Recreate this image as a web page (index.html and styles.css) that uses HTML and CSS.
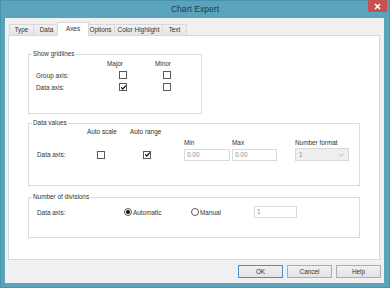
FILE: index.html
```html
<!DOCTYPE html>
<html lang="en">
<head>
    <meta charset="UTF-8">
    <title>Chart Expert</title>
    <link rel="stylesheet" href="styles.css">
</head>
<body>
    <div class="window">
        <div class="titlebar">
            <span></span>
            <span class="title">Chart Expert</span>
            <span class="close">
                <svg width="7" height="7" viewBox="0 0 7 7"><path d="M1 1 L6 6 M6 1 L1 6" stroke="#fff" stroke-width="1.6"/></svg>
            </span>
        </div>

        <div class="client">
            <div class="tabs">
                <div class="tab">Type</div>
                <div class="tab">Data</div>
                <div class="tab active">Axes</div>
                <div class="tab">Options</div>
                <div class="tab">Color Highlight</div>
                <div class="tab">Text</div>
            </div>

            <div class="panel">
                <div class="group gridlines">
                    <div class="group-title">Show gridlines</div>
                    <div class="gridlines-grid">
                        <span></span>
                        <span>Major</span>
                        <span>Minor</span>

                        <span>Group axis:</span>
                        <span class="cell major"><span class="check"></span></span>
                        <span class="cell minor"><span class="check"></span></span>

                        <span>Data axis:</span>
                        <span class="cell major">
                            <span class="check"><svg width="7" height="7" viewBox="0 0 7 7"><path d="M1.2 3.4 L2.8 5 L5.8 1.6" fill="none" stroke="#111" stroke-width="1.3"/></svg></span>
                        </span>
                        <span class="cell minor"><span class="check"></span></span>
                    </div>
                </div>

                <div class="group values">
                    <div class="group-title">Data values</div>
                    <div class="values-grid">
                        <span class="row-a"></span>
                        <span class="row-a">Auto scale</span>
                        <span class="row-a">Auto range</span>
                        <span class="row-a"></span>
                        <span class="row-a"></span>
                        <span class="row-a"></span>

                        <span></span>
                        <span></span>
                        <span></span>
                        <span>Min</span>
                        <span>Max</span>
                        <span>Number format</span>

                        <span class="cell">Data axis:</span>
                        <span class="cell scale"><span class="check"></span></span>
                        <span class="cell range">
                            <span class="check"><svg width="7" height="7" viewBox="0 0 7 7"><path d="M1.2 3.4 L2.8 5 L5.8 1.6" fill="none" stroke="#111" stroke-width="1.3"/></svg></span>
                        </span>
                        <span class="cell"><span class="field min-field">0.00</span></span>
                        <span class="cell"><span class="field max-field">0.00</span></span>
                        <span class="cell">
                            <span class="select">1
                                <svg width="6" height="4" viewBox="0 0 6 4"><path d="M0.5 0.8 L3 3.2 L5.5 0.8" fill="none" stroke="#a8a8a8" stroke-width="0.8"/></svg>
                            </span>
                        </span>
                    </div>
                </div>

                <div class="group divisions">
                    <div class="group-title">Number of divisions</div>
                    <div class="divisions-row">
                        <span class="div-label">Data axis:</span>
                        <span class="option auto"><span class="radio on"></span>Automatic</span>
                        <span class="option manual"><span class="radio"></span>Manual</span>
                        <span class="field count-field">1</span>
                    </div>
                </div>
            </div>

            <div class="buttons">
                <button class="btn default">OK</button>
                <button class="btn">Cancel</button>
                <button class="btn">Help</button>
            </div>
        </div>
    </div>
</body>
</html>
```

FILE: styles.css
```css
body {
    margin: 0;
    font-family: 'Liberation Sans', Arial, sans-serif;
    font-size: 6.4px;
    color: #333;
}

.window {
    display: flex;
    flex-direction: column;
    width: 390px;
    height: 288px;
    box-sizing: border-box;
    background-color: #5aa3bd;
    border: 1px solid #4a93ad;
    padding: 0 5px 4px 4px;
}

.titlebar {
    display: grid;
    grid-template-columns: 1fr auto 1fr;
    height: 17px;
    margin: 0 -5px 0 -4px;
}

.title {
    font-size: 8.6px;
    line-height: 17px;
    color: #2b3a40;
}

.close {
    justify-self: end;
    display: flex;
    align-items: center;
    justify-content: center;
    width: 19px;
    height: 12px;
    margin-top: -1px;
    margin-right: 2px;
    background-color: #c75050;
}

.client {
    flex: 1;
    display: flex;
    flex-direction: column;
    background-color: #f0f0f0;
}

/* tabs */
.tabs {
    display: grid;
    grid-template-columns: 24px 26px 27px 28px 48px 24px;
    align-items: end;
    height: 14px;
    margin: 4px 0 -1px 5px;
}

.tab {
    height: 11px;
    margin-bottom: 1px;
    box-sizing: border-box;
    border: 1px solid #d9d9d9;
    border-bottom: none;
    margin-left: -1px;
    background: linear-gradient(#f2f2f2, #e5e5e5);
    text-align: center;
    line-height: 10px;
}

.tab.active {
    position: relative;
    z-index: 1;
    height: 14px;
    margin: 0 -2px 0 -3px;
    background: #ffffff;
    line-height: 11px;
}

.panel {
    display: flex;
    flex-direction: column;
    align-items: flex-start;
    width: 372px;
    height: 225px;
    box-sizing: border-box;
    margin-left: 3px;
    background-color: #ffffff;
    border: 1px solid #d9d9d9;
    padding-left: 19px;
}

/* group boxes */
.group {
    box-sizing: border-box;
    border: 1px solid #dcdcdc;
}

.group-title {
    width: fit-content;
    margin: -5px 0 0 3px;
    padding: 0 1px;
    line-height: 8px;
    background-color: #ffffff;
}

.gridlines {
    width: 174px;
    height: 60px;
    margin-top: 18px;
}

.values {
    width: 332px;
    height: 63px;
    margin-top: 9px;
}

.divisions {
    width: 332px;
    height: 41px;
    margin-top: 11px;
}

.gridlines-grid {
    display: grid;
    grid-template-columns: 71px 48px 40px;
    grid-auto-rows: 12px;
    align-items: center;
    margin-top: -1px;
    padding-left: 7px;
}

.cell {
    display: flex;
    align-items: center;
}

.major {
    padding-left: 12px;
}

.minor {
    padding-left: 8px;
}

.check {
    display: flex;
    align-items: center;
    justify-content: center;
    width: 8px;
    height: 8px;
    box-sizing: border-box;
    border: 1px solid #5a5a5a;
    background-color: #ffffff;
}

.check svg {
    flex: none;
}

.values-grid {
    display: grid;
    grid-template-columns: 50px 43px 54px 48px 63px 54px;
    grid-template-rows: 9px 10px 13px;
    row-gap: 1px;
    align-items: center;
    padding-left: 8px;
}

.scale {
    padding-left: 10px;
}

.range {
    padding-left: 13px;
}

.field {
    display: block;
    height: 12px;
    box-sizing: border-box;
    border: 1px solid #d9d9d9;
    background-color: #ffffff;
    color: #8c8c8c;
    line-height: 10px;
    padding-left: 2px;
}

.min-field {
    width: 46px;
}

.max-field {
    width: 45px;
}

.select {
    display: flex;
    justify-content: space-between;
    align-items: center;
    width: 54px;
    height: 13px;
    box-sizing: border-box;
    border: 1px solid #d9d9d9;
    background-color: #efefef;
    color: #8c8c8c;
    padding: 0 4px 0 3px;
}

.divisions-row {
    display: flex;
    align-items: center;
    height: 12px;
    margin-top: 5px;
    padding-left: 8px;
}

.div-label {
    width: 87px;
}

.option {
    display: flex;
    align-items: center;
    gap: 1px;
}

.auto {
    width: 67px;
}

.manual {
    width: 63px;
}

.radio {
    display: flex;
    align-items: center;
    justify-content: center;
    width: 8px;
    height: 8px;
    box-sizing: border-box;
    border: 1px solid #5a5a5a;
    border-radius: 50%;
    background-color: #ffffff;
}

.radio.on::after {
    content: "";
    width: 4px;
    height: 4px;
    border-radius: 50%;
    background-color: #111;
}

.count-field {
    width: 43px;
}

/* dialog buttons */
.buttons {
    display: flex;
    justify-content: flex-end;
    gap: 4px;
    margin: 5px 3px 0 0;
}

.btn {
    width: 45px;
    height: 13px;
    padding: 0;
    box-sizing: border-box;
    border: 1px solid #adadad;
    background: linear-gradient(#f0f0f0, #e3e3e3);
    font-family: 'Liberation Sans', Arial, sans-serif;
    font-size: 6.4px;
    color: #333;
}

.btn.default {
    border-color: #4a8fcb;
}
```
